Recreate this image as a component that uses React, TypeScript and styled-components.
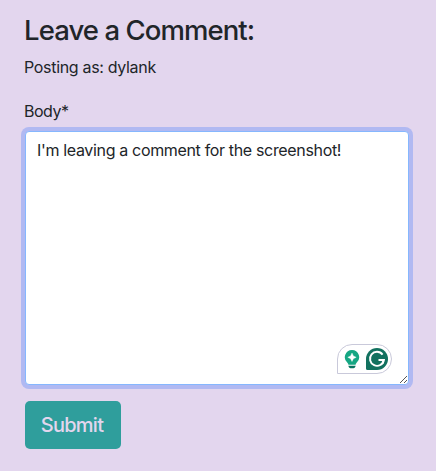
import React from "react";
import styled, { createGlobalStyle } from "styled-components";

const GlobalStyle = createGlobalStyle`
  *, *::before, *::after { box-sizing: border-box; }
  body {
    margin: 0;
    background: #e3d6ee;
    color: #212529;
    font-family: Inter, "Liberation Sans", sans-serif;
    font-size: 16px;
    line-height: 24px;
    letter-spacing: -0.32px;
  }
`;

const Page = styled.main`
  min-height: 471px;
  padding: 13px 27px 0 25px;
`;

const Title = styled.h3`
  margin: 0 0 8px;
  font-size: 27.5px;
  font-weight: 550;
  line-height: 34px;
  letter-spacing: -0.92px;
  text-indent: -1px;
`;

const Author = styled.p`
  margin: 0 0 20px;
  text-indent: -1px;
`;

const Label = styled.label`
  display: block;
  margin-bottom: 8px;
  text-indent: -1px;
  letter-spacing: -0.5px;
`;

const Field = styled.div`
  position: relative;
  height: 254px;
  margin-bottom: 16px;
`;

const BodyInput = styled.textarea`
  display: block;
  width: 100%;
  height: 100%;
  padding: 6px 11px;
  border: 1px solid #86b7fe;
  border-radius: 4px;
  outline: 0;
  background: #fff;
  color: #212529;
  font: inherit;
  letter-spacing: -0.34px;
  resize: none;
  box-shadow: 0 0 0 4px #b1b9f2;
`;

const Assistant = styled.div`
  position: absolute;
  right: 17px;
  bottom: 11px;
  display: flex;
  align-items: center;
  gap: 6px;
  width: 55px;
  height: 30px;
  padding-left: 6px;
  border: 1px solid #c9c9da;
  border-radius: 15px 15px 15px 0;
  background: #fff;
`;

const ResizeGrip = styled.svg`
  position: absolute;
  right: 1px;
  bottom: 1px;
`;

const SubmitButton = styled.button`
  display: block;
  width: 96px;
  height: 48px;
  padding: 0 2px 0 0;
  border: 0;
  border-radius: 5px;
  background: #2f9e9c;
  color: #e3d6ee;
  font: inherit;
  font-size: 20px;
  font-weight: 450;
  line-height: 30px;
  letter-spacing: -0.75px;
`;

const BulbIcon = () => (
  <svg width="16" height="20" viewBox="0 0 16 20">
    <path d="M8 1a7.2 7.2 0 0 0-4.6 12.7c.7.6.9 1.2 1 2h7.2c.1-.8.3-1.4 1-2A7.2 7.2 0 0 0 8 1Z" fill="#15a683" />
    <path d="M4.4 16.8h7.2c-.2 1.6-1 2.4-2.2 2.4H6.6c-1.2 0-2-.8-2.2-2.4Z" fill="#087460" />
    <path d="M8 4.1 9.4 6.9 12.2 8.3 9.4 9.7 8 12.5 6.6 9.7 3.8 8.3 6.6 6.9Z" fill="#fff" stroke="#fff" strokeWidth=".4" />
  </svg>
);

const WritingIcon = () => (
  <svg width="22" height="22" viewBox="0 0 22 22">
    <path d="M11 0a11 11 0 1 1 0 22H1.5Q0 22 0 20.5V11A11 11 0 0 1 11 0Z" fill="#12715f" />
    <path d="M16.6 6.6A7 7 0 1 0 17.9 12h-5.4" fill="none" stroke="#fff" strokeWidth="1.9" />
    <path d="M15.2 12.2H18v4Z" fill="#fff" />
  </svg>
);

export default function App() {
  return (
    <>
      <GlobalStyle />
      <Page>
        <Title>Leave a Comment:</Title>
        <Author>Posting as: dylank</Author>
        <Label htmlFor="body">Body*</Label>
        <Field>
          <BodyInput id="body" spellCheck={false} defaultValue="I'm leaving a comment for the screenshot!" />
          <Assistant>
            <BulbIcon />
            <WritingIcon />
          </Assistant>
          <ResizeGrip width="9" height="9" viewBox="0 0 9 9">
            <path d="M1 8 8 1M5 8l3-3" stroke="#555" fill="none" />
          </ResizeGrip>
        </Field>
        <SubmitButton type="button">Submit</SubmitButton>
      </Page>
    </>
  );
}
